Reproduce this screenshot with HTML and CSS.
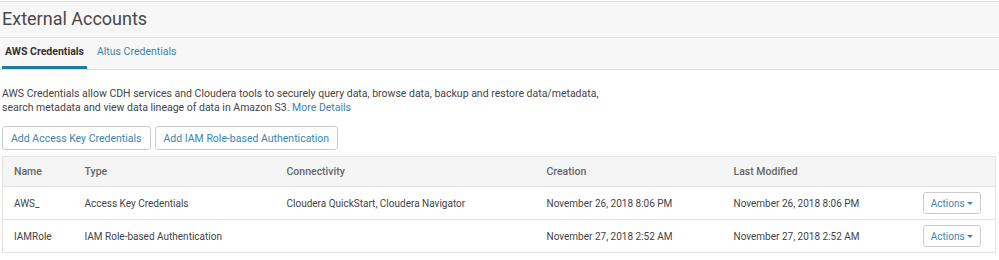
FILE: index.html
```html
<!DOCTYPE html>
<html>
<head>
<meta charset="utf-8">
<link rel="stylesheet" href="styles.css">
</head>
<body>
<div class="page">
  <div class="header"><h1 class="title">External Accounts</h1></div>
  <div class="tabs">
    <a class="tab active">AWS Credentials</a>
    <a class="tab">Altus Credentials</a>
  </div>
  <div class="content">
    <p class="desc">AWS Credentials allow CDH services and Cloudera tools to securely query data, browse data, backup and restore data/metadata,<br>search metadata and view data lineage of data in Amazon S3. <a class="link">More Details</a></p>
    <div class="btns">
      <button class="btn">Add Access Key Credentials</button>
      <button class="btn">Add IAM Role-based Authentication</button>
    </div>
    <table class="tbl">
      <thead>
        <tr><th class="c-name">Name</th><th class="c-type">Type</th><th class="c-conn">Connectivity</th><th class="c-cre">Creation</th><th class="c-mod">Last Modified</th><th class="c-act"></th></tr>
      </thead>
      <tbody>
        <tr><td>AWS_</td><td>Access Key Credentials</td><td>Cloudera QuickStart, Cloudera Navigator</td><td>November 26, 2018 8:06 PM</td><td>November 26, 2018 8:06 PM</td><td class="c-act"><button class="act">Actions <span class="caret"></span></button></td></tr>
        <tr><td>IAMRole</td><td>IAM Role-based Authentication</td><td></td><td>November 27, 2018 2:52 AM</td><td>November 27, 2018 2:52 AM</td><td class="c-act"><button class="act">Actions <span class="caret"></span></button></td></tr>
      </tbody>
    </table>
  </div>
</div>
</body>
</html>
```
FILE: styles.css
```css
* { box-sizing: border-box; }
body { margin: 0; background: #fff; font-family: Roboto, "Liberation Sans", sans-serif; color: #444; }
.page { padding-top: 1px; }
.header { border-top: 1px solid #dedede; border-bottom: 1px solid #e3e3e3; background: #f7f7f7; height: 37px; padding-left: 2px; }
.title { margin: 0; font-size: 18px; font-weight: 400; line-height: 34px; color: #484848; }
.tabs { display: flex; background: #f7f7f7; height: 32px; border-bottom: 1px solid #ddd; padding-left: 2px; }
.tab { font-size: 10.5px; line-height: 27px; padding: 0 3px; margin-right: 4px; color: #3a86ad; border-bottom: 3px solid transparent; height: 31px; }
.tab.active { color: #333; font-weight: 700; border-bottom-color: #1c7c9e; padding-right: 3px; margin-right: 7px; }
.content { padding: 0 3px 0 2px; }
.desc { margin: 17px 0 0; font-size: 10.5px; line-height: 14px; color: #444; }
.link { color: #3a86ad; }
.btns { display: flex; gap: 4px; margin-top: 11px; }
.btn { font-family: inherit; font-size: 10.5px; color: #3a86ad; background: #fff; border: 1px solid #ccc; border-radius: 3px; height: 24px; padding: 0 8px; }
.tbl { width: 100%; border-collapse: collapse; margin-top: 6px; font-size: 10px; border: 1px solid #e3e3e3; }
.tbl th { text-align: left; font-weight: 500; color: #666; background: #f5f5f5; height: 30px; padding: 0 0 0 11px; font-size: 10.5px; }
.tbl td { height: 33px; border-top: 1px solid #e3e3e3; padding: 0 0 0 11px; color: #444; }
.c-name { width: 71px; }
.c-type { width: 202px; }
.c-conn { width: 260px; }
.c-cre { width: 187px; }
.c-mod { width: 189px; }
.tbl td.c-act { padding: 0 14px 0 0; text-align: right; }
.act { font-family: inherit; font-size: 10px; color: #3a86ad; background: #fff; border: 1px solid #ccc; border-radius: 3px; height: 22px; width: 58px; padding: 0; }
.caret { display: inline-block; width: 0; height: 0; border-left: 3px solid transparent; border-right: 3px solid transparent; border-top: 3px solid #3a86ad; vertical-align: middle; }
```
